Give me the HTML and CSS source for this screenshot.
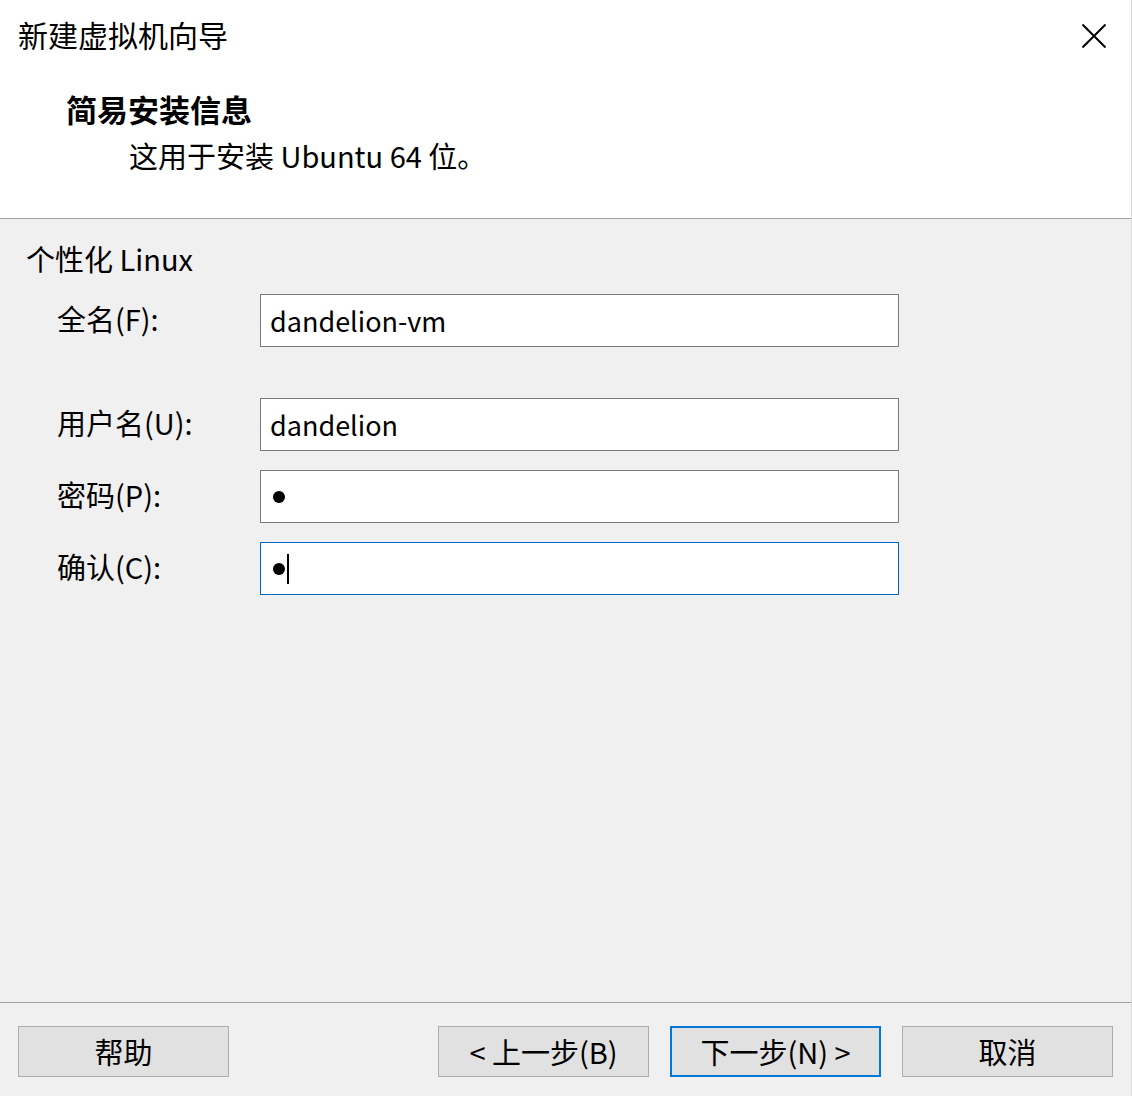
FILE: index.html
```html
<!DOCTYPE html>
<html lang="zh-CN">
<head>
    <meta charset="UTF-8">
    <title>新建虚拟机向导</title>
    <link rel="stylesheet" href="styles.css">
</head>
<body>

    <div class="wizard">
        <div class="header">
            <div class="title-bar">
                <span class="title">新建虚拟机向导</span>
                <svg class="close" width="24" height="24" viewBox="0 0 24 24">
                    <path d="M0.5 0.5 L23.5 23.5 M23.5 0.5 L0.5 23.5" stroke="#000" stroke-width="2" fill="none"/>
                </svg>
            </div>
            <div class="heading">简易安装信息</div>
            <div class="subheading">这用于安装 Ubuntu 64 位。</div>
        </div>

        <div class="content">
            <div class="group-title">个性化 Linux</div>
            <div class="form">
                <div class="row">
                    <label>全名(F):</label>
                    <div class="field">dandelion-vm</div>
                </div>
                <div class="row wide-gap">
                    <label>用户名(U):</label>
                    <div class="field">dandelion</div>
                </div>
                <div class="row">
                    <label>密码(P):</label>
                    <div class="field"><span class="dot"></span></div>
                </div>
                <div class="row">
                    <label>确认(C):</label>
                    <div class="field focused"><span class="dot"></span><span class="caret"></span></div>
                </div>
            </div>
        </div>

        <div class="footer">
            <button>帮助</button>
            <div class="nav">
                <button>&lt; 上一步(B)</button>
                <button class="default">下一步(N) &gt;</button>
                <button>取消</button>
            </div>
        </div>
    </div>

</body>
</html>
```

FILE: styles.css
```css
body {
    margin: 0;
    font-family: "Noto Sans CJK SC", "Noto Sans", sans-serif;
    color: #000;
    background-color: #f0f0f0;
}

.wizard {
    width: 1132px;
    height: 1096px;
    display: flex;
    flex-direction: column;
    box-sizing: border-box;
    border-right: 1px solid #d8d8d8;
}

/* top white banner */
.header {
    background-color: #fff;
    height: 219px;
    box-sizing: border-box;
    border-bottom: 1px solid #a0a0a0;
    padding: 14px 0 0 18px;
}

.title-bar {
    display: flex;
    justify-content: space-between;
    align-items: center;
    height: 40px;
    padding-right: 25px;
}

.close {
    margin-top: 4px;
}

.title {
    font-size: 30px;
    line-height: 40px;
}

.heading {
    margin: 35px 0 0 48px;
    font-size: 31px;
    font-weight: bold;
    line-height: 40px;
}

.subheading {
    margin: 6px 0 0 111px;
    font-size: 29px;
    line-height: 40px;
}

/* form body */
.content {
    flex: 1;
    padding: 19px 0 0 26px;
}

.group-title {
    font-size: 29px;
    line-height: 40px;
}

.form {
    margin-top: 16px;
    display: flex;
    flex-direction: column;
    gap: 19px;
}

.row {
    display: flex;
    align-items: center;
}

.row.wide-gap {
    margin-top: 32px;
}

.row label {
    width: 234px;
    padding-left: 31px;
    box-sizing: border-box;
    font-size: 29px;
    margin-top: -6px;
}

.field {
    width: 639px;
    height: 53px;
    box-sizing: border-box;
    border: 1px solid #7a7a7a;
    background-color: #fff;
    padding-left: 9px;
    font-size: 27px;
    line-height: 49px;
    display: flex;
    align-items: center;
}

.field.focused {
    border-color: #0067c0;
}

.dot {
    display: inline-block;
    width: 12px;
    height: 12px;
    border-radius: 50%;
    background-color: #000;
    margin-left: 3px;
}

.caret {
    display: inline-block;
    width: 2px;
    height: 30px;
    background-color: #000;
    margin-left: 2px;
}

/* bottom buttons */
.footer {
    border-top: 1px solid #a0a0a0;
    height: 94px;
    box-sizing: border-box;
    padding: 23px 18px 0 18px;
    display: flex;
    justify-content: space-between;
    align-items: flex-start;
}

.nav {
    display: flex;
    gap: 21px;
}

button {
    width: 211px;
    height: 51px;
    box-sizing: border-box;
    border: 1px solid #adadad;
    background-color: #e1e1e1;
    font-family: "Noto Sans CJK SC", "Noto Sans", sans-serif;
    font-size: 29px;
    color: #000;
    padding: 0;
    line-height: 47px;
}

button.default {
    border: 2px solid #0078d7;
}
```
